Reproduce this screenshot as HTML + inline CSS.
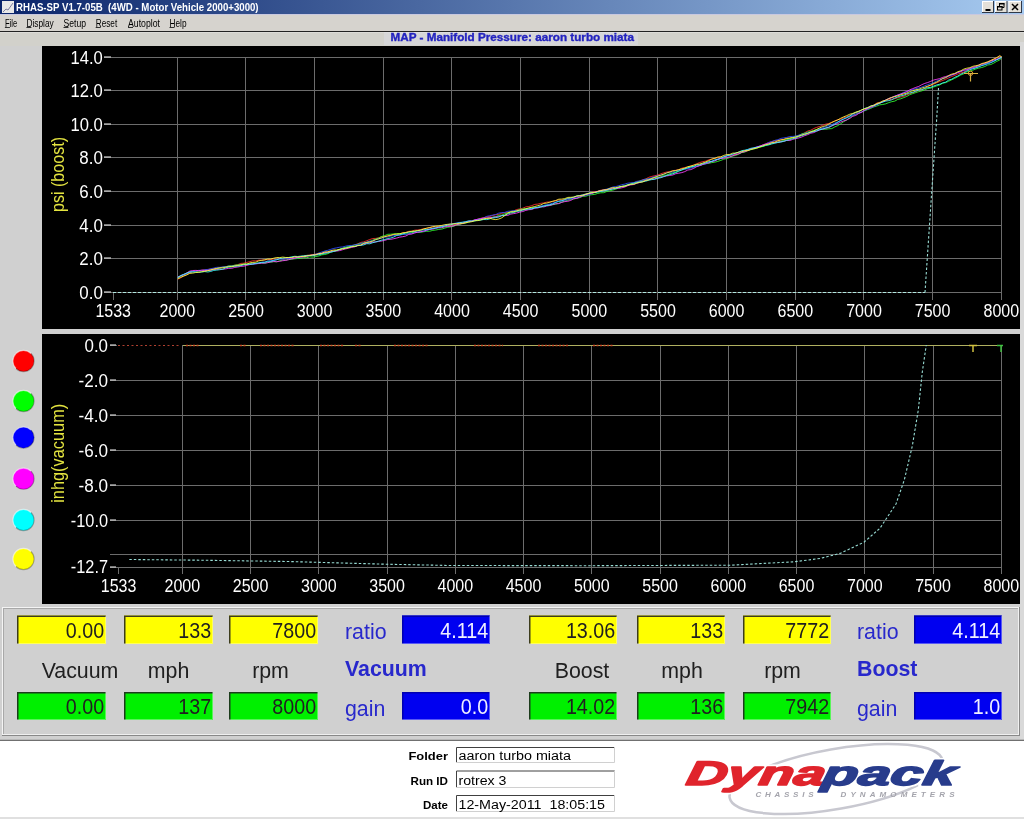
<!DOCTYPE html>
<html><head><meta charset="utf-8"><style>html,body{margin:0;padding:0;background:#d4d0c8;overflow:hidden}svg text{font-family:'Liberation Sans', sans-serif}</style></head>
<body>
<svg width="1024" height="819" viewBox="0 0 1024 819" style="display:block;font-family:'Liberation Sans', sans-serif;will-change:transform">
<defs><clipPath id="c1"><rect x="42" y="46" width="978" height="283"/></clipPath><linearGradient id="tb" x1="0" x2="1" y1="0" y2="0"><stop offset="0" stop-color="#0a246a"/><stop offset="1" stop-color="#a6caf0"/></linearGradient></defs>
<rect x="0" y="0" width="1024" height="819" fill="#d0d0d0"/>
<rect x="0" y="14" width="1024" height="18" fill="#d6d3ce"/>
<rect x="0" y="32" width="1024" height="14" fill="#d2d1cb"/>
<rect x="384" y="32" width="254" height="13" fill="#d6d6d8"/>
<rect x="1020" y="42" width="4" height="698" fill="#d9d9d9"/>
<rect x="0" y="0" width="1024" height="14" fill="url(#tb)"/>
<rect x="0" y="14" width="1024" height="1" fill="#c8c8e0"/>
<rect x="2" y="1" width="12" height="12" fill="#e8e8e8"/>
<polyline points="3,12 6,9 8,10 13,3" fill="none" stroke="#8080a0" stroke-width="1"/>
<text x="16" y="11" font-size="10" fill="#ffffff" text-anchor="start" font-weight="bold" textLength="242.6" lengthAdjust="spacingAndGlyphs" >RHAS-SP V1.7-05B&#160;&#160;(4WD - Motor Vehicle 2000+3000)</text>
<rect x="982" y="1" width="12" height="12" fill="#e4e0d8"/>
<rect x="982" y="1" width="12" height="1" fill="#ffffff"/><rect x="982" y="1" width="1" height="12" fill="#ffffff"/>
<rect x="982" y="12" width="12" height="1" fill="#303848"/><rect x="993" y="1" width="1" height="12" fill="#303848"/>
<rect x="995" y="1" width="12.5" height="12" fill="#e4e0d8"/>
<rect x="995" y="1" width="12.5" height="1" fill="#ffffff"/><rect x="995" y="1" width="1" height="12" fill="#ffffff"/>
<rect x="995" y="12" width="12.5" height="1" fill="#303848"/><rect x="1006.5" y="1" width="1" height="12" fill="#303848"/>
<rect x="1008.5" y="1" width="13.5" height="12" fill="#e4e0d8"/>
<rect x="1008.5" y="1" width="13.5" height="1" fill="#ffffff"/><rect x="1008.5" y="1" width="1" height="12" fill="#ffffff"/>
<rect x="1008.5" y="12" width="13.5" height="1" fill="#303848"/><rect x="1021.0" y="1" width="1" height="12" fill="#303848"/>
<rect x="985.5" y="9" width="5" height="2" fill="#000"/>
<path d="M999.5 6.5 V3.5 H1004 V7.5 H1002" fill="none" stroke="#000" stroke-width="1"/><rect x="999" y="3" width="5.5" height="1.5" fill="#000"/>
<rect x="997.5" y="6.5" width="4.5" height="3.5" fill="none" stroke="#000" stroke-width="1"/><rect x="997" y="6" width="5.5" height="1.5" fill="#000"/>
<path d="M1012 4 L1018 10 M1018 4 L1012 10" stroke="#000" stroke-width="1.5"/>
<text x="4.9" y="26.5" font-size="10.5" fill="#000" text-anchor="start" font-weight="normal" textLength="12.3" lengthAdjust="spacingAndGlyphs" >File</text>
<rect x="4.9" y="27" width="5.0" height="1" fill="#303030"/>
<text x="26.4" y="26.5" font-size="10.5" fill="#000" text-anchor="start" font-weight="normal" textLength="27.3" lengthAdjust="spacingAndGlyphs" >Display</text>
<rect x="26.4" y="27" width="5.0" height="1" fill="#303030"/>
<text x="63.5" y="26.5" font-size="10.5" fill="#000" text-anchor="start" font-weight="normal" textLength="22.5" lengthAdjust="spacingAndGlyphs" >Setup</text>
<rect x="63.5" y="27" width="5.0" height="1" fill="#303030"/>
<text x="95.7" y="26.5" font-size="10.5" fill="#000" text-anchor="start" font-weight="normal" textLength="21.5" lengthAdjust="spacingAndGlyphs" >Reset</text>
<rect x="95.7" y="27" width="5.0" height="1" fill="#303030"/>
<text x="128" y="26.5" font-size="10.5" fill="#000" text-anchor="start" font-weight="normal" textLength="32" lengthAdjust="spacingAndGlyphs" >Autoplot</text>
<rect x="128" y="27" width="5.0" height="1" fill="#303030"/>
<text x="169.5" y="26.5" font-size="10.5" fill="#000" text-anchor="start" font-weight="normal" textLength="17" lengthAdjust="spacingAndGlyphs" >Help</text>
<rect x="169.5" y="27" width="5.0" height="1" fill="#303030"/>
<rect x="0" y="31" width="1024" height="1" fill="#222222"/>
<rect x="0" y="32" width="1024" height="1" fill="#ffffff" opacity="0.25"/>
<text x="390.5" y="40.8" font-size="10.8" fill="#2424c0" text-anchor="start" font-weight="bold" textLength="243.5" lengthAdjust="spacingAndGlyphs" stroke="#2424c0" stroke-width="0.35">MAP - Manifold Pressure: aaron turbo miata</text>
<rect x="42" y="46" width="978" height="283" fill="#000"/>
<line x1="104" y1="292.5" x2="1001" y2="292.5" stroke="#6c6c6c" stroke-width="1"/>
<line x1="104" y1="258.5" x2="1001" y2="258.5" stroke="#6c6c6c" stroke-width="1"/>
<line x1="104" y1="225.5" x2="1001" y2="225.5" stroke="#6c6c6c" stroke-width="1"/>
<line x1="104" y1="191.5" x2="1001" y2="191.5" stroke="#6c6c6c" stroke-width="1"/>
<line x1="104" y1="157.5" x2="1001" y2="157.5" stroke="#6c6c6c" stroke-width="1"/>
<line x1="104" y1="124.5" x2="1001" y2="124.5" stroke="#6c6c6c" stroke-width="1"/>
<line x1="104" y1="90.5" x2="1001" y2="90.5" stroke="#6c6c6c" stroke-width="1"/>
<line x1="104" y1="57.5" x2="1001" y2="57.5" stroke="#6c6c6c" stroke-width="1"/>
<line x1="113.5" y1="292.0" x2="113.5" y2="300" stroke="#6c6c6c" stroke-width="1"/>
<line x1="177.5" y1="57.0" x2="177.5" y2="300" stroke="#6c6c6c" stroke-width="1"/>
<line x1="245.5" y1="57.0" x2="245.5" y2="300" stroke="#6c6c6c" stroke-width="1"/>
<line x1="314.5" y1="57.0" x2="314.5" y2="300" stroke="#6c6c6c" stroke-width="1"/>
<line x1="383.5" y1="57.0" x2="383.5" y2="300" stroke="#6c6c6c" stroke-width="1"/>
<line x1="451.5" y1="57.0" x2="451.5" y2="300" stroke="#6c6c6c" stroke-width="1"/>
<line x1="520.5" y1="57.0" x2="520.5" y2="300" stroke="#6c6c6c" stroke-width="1"/>
<line x1="589.5" y1="57.0" x2="589.5" y2="300" stroke="#6c6c6c" stroke-width="1"/>
<line x1="657.5" y1="57.0" x2="657.5" y2="300" stroke="#6c6c6c" stroke-width="1"/>
<line x1="726.5" y1="57.0" x2="726.5" y2="300" stroke="#6c6c6c" stroke-width="1"/>
<line x1="795.5" y1="57.0" x2="795.5" y2="300" stroke="#6c6c6c" stroke-width="1"/>
<line x1="863.5" y1="57.0" x2="863.5" y2="300" stroke="#6c6c6c" stroke-width="1"/>
<line x1="932.5" y1="57.0" x2="932.5" y2="300" stroke="#6c6c6c" stroke-width="1"/>
<line x1="1001.5" y1="57.0" x2="1001.5" y2="300" stroke="#6c6c6c" stroke-width="1"/>
<text x="102.8" y="299.0" font-size="18" fill="#fff" text-anchor="end" font-weight="normal" textLength="23.5" lengthAdjust="spacingAndGlyphs" >0.0</text>
<line x1="104" y1="292.0" x2="111" y2="292.0" stroke="#d0d0d0" stroke-width="1.2"/>
<text x="102.8" y="265.0" font-size="18" fill="#fff" text-anchor="end" font-weight="normal" textLength="23.5" lengthAdjust="spacingAndGlyphs" >2.0</text>
<line x1="104" y1="258.0" x2="111" y2="258.0" stroke="#d0d0d0" stroke-width="1.2"/>
<text x="102.8" y="232.0" font-size="18" fill="#fff" text-anchor="end" font-weight="normal" textLength="23.5" lengthAdjust="spacingAndGlyphs" >4.0</text>
<line x1="104" y1="225.0" x2="111" y2="225.0" stroke="#d0d0d0" stroke-width="1.2"/>
<text x="102.8" y="198.0" font-size="18" fill="#fff" text-anchor="end" font-weight="normal" textLength="23.5" lengthAdjust="spacingAndGlyphs" >6.0</text>
<line x1="104" y1="191.0" x2="111" y2="191.0" stroke="#d0d0d0" stroke-width="1.2"/>
<text x="102.8" y="164.0" font-size="18" fill="#fff" text-anchor="end" font-weight="normal" textLength="23.5" lengthAdjust="spacingAndGlyphs" >8.0</text>
<line x1="104" y1="157.0" x2="111" y2="157.0" stroke="#d0d0d0" stroke-width="1.2"/>
<text x="102.8" y="131.0" font-size="18" fill="#fff" text-anchor="end" font-weight="normal" textLength="32.3" lengthAdjust="spacingAndGlyphs" >10.0</text>
<line x1="104" y1="124.0" x2="111" y2="124.0" stroke="#d0d0d0" stroke-width="1.2"/>
<text x="102.8" y="97.0" font-size="18" fill="#fff" text-anchor="end" font-weight="normal" textLength="32.3" lengthAdjust="spacingAndGlyphs" >12.0</text>
<line x1="104" y1="90.0" x2="111" y2="90.0" stroke="#d0d0d0" stroke-width="1.2"/>
<text x="102.8" y="64.0" font-size="18" fill="#fff" text-anchor="end" font-weight="normal" textLength="32.3" lengthAdjust="spacingAndGlyphs" >14.0</text>
<line x1="104" y1="57.0" x2="111" y2="57.0" stroke="#d0d0d0" stroke-width="1.2"/>
<text x="113.2" y="317" font-size="18" fill="#fff" text-anchor="middle" font-weight="normal" textLength="35.6" lengthAdjust="spacingAndGlyphs" >1533</text>
<text x="177.3" y="317" font-size="18" fill="#fff" text-anchor="middle" font-weight="normal" textLength="35.6" lengthAdjust="spacingAndGlyphs" >2000</text>
<text x="246.0" y="317" font-size="18" fill="#fff" text-anchor="middle" font-weight="normal" textLength="35.6" lengthAdjust="spacingAndGlyphs" >2500</text>
<text x="314.6" y="317" font-size="18" fill="#fff" text-anchor="middle" font-weight="normal" textLength="35.6" lengthAdjust="spacingAndGlyphs" >3000</text>
<text x="383.3" y="317" font-size="18" fill="#fff" text-anchor="middle" font-weight="normal" textLength="35.6" lengthAdjust="spacingAndGlyphs" >3500</text>
<text x="452.0" y="317" font-size="18" fill="#fff" text-anchor="middle" font-weight="normal" textLength="35.6" lengthAdjust="spacingAndGlyphs" >4000</text>
<text x="520.6" y="317" font-size="18" fill="#fff" text-anchor="middle" font-weight="normal" textLength="35.6" lengthAdjust="spacingAndGlyphs" >4500</text>
<text x="589.3" y="317" font-size="18" fill="#fff" text-anchor="middle" font-weight="normal" textLength="35.6" lengthAdjust="spacingAndGlyphs" >5000</text>
<text x="658.0" y="317" font-size="18" fill="#fff" text-anchor="middle" font-weight="normal" textLength="35.6" lengthAdjust="spacingAndGlyphs" >5500</text>
<text x="726.6" y="317" font-size="18" fill="#fff" text-anchor="middle" font-weight="normal" textLength="35.6" lengthAdjust="spacingAndGlyphs" >6000</text>
<text x="795.3" y="317" font-size="18" fill="#fff" text-anchor="middle" font-weight="normal" textLength="35.6" lengthAdjust="spacingAndGlyphs" >6500</text>
<text x="864.0" y="317" font-size="18" fill="#fff" text-anchor="middle" font-weight="normal" textLength="35.6" lengthAdjust="spacingAndGlyphs" >7000</text>
<text x="932.6" y="317" font-size="18" fill="#fff" text-anchor="middle" font-weight="normal" textLength="35.6" lengthAdjust="spacingAndGlyphs" >7500</text>
<text x="1001.3" y="317" font-size="18" fill="#fff" text-anchor="middle" font-weight="normal" textLength="35.6" lengthAdjust="spacingAndGlyphs" >8000</text>
<text x="0" y="0" font-size="19" fill="#e4e440" text-anchor="middle" transform="translate(64.1,174.5) rotate(-90)" textLength="75" lengthAdjust="spacingAndGlyphs">psi (boost)</text>
<rect x="42" y="334" width="978" height="270" fill="#000"/>
<line x1="110" y1="345.5" x2="117" y2="345.5" stroke="#6c6c6c" stroke-width="1"/>
<line x1="110" y1="380.5" x2="1001" y2="380.5" stroke="#6c6c6c" stroke-width="1"/>
<line x1="110" y1="415.5" x2="1001" y2="415.5" stroke="#6c6c6c" stroke-width="1"/>
<line x1="110" y1="450.5" x2="1001" y2="450.5" stroke="#6c6c6c" stroke-width="1"/>
<line x1="110" y1="485.5" x2="1001" y2="485.5" stroke="#6c6c6c" stroke-width="1"/>
<line x1="110" y1="520.5" x2="1001" y2="520.5" stroke="#6c6c6c" stroke-width="1"/>
<line x1="110" y1="554.5" x2="1001" y2="554.5" stroke="#6c6c6c" stroke-width="1"/>
<line x1="110" y1="567.5" x2="1001" y2="567.5" stroke="#6c6c6c" stroke-width="1"/>
<line x1="118.5" y1="567.0" x2="118.5" y2="574" stroke="#6c6c6c" stroke-width="1"/>
<line x1="182.5" y1="345.0" x2="182.5" y2="574" stroke="#6c6c6c" stroke-width="1"/>
<line x1="250.5" y1="345.0" x2="250.5" y2="574" stroke="#6c6c6c" stroke-width="1"/>
<line x1="318.5" y1="345.0" x2="318.5" y2="574" stroke="#6c6c6c" stroke-width="1"/>
<line x1="387.5" y1="345.0" x2="387.5" y2="574" stroke="#6c6c6c" stroke-width="1"/>
<line x1="455.5" y1="345.0" x2="455.5" y2="574" stroke="#6c6c6c" stroke-width="1"/>
<line x1="523.5" y1="345.0" x2="523.5" y2="574" stroke="#6c6c6c" stroke-width="1"/>
<line x1="591.5" y1="345.0" x2="591.5" y2="574" stroke="#6c6c6c" stroke-width="1"/>
<line x1="660.5" y1="345.0" x2="660.5" y2="574" stroke="#6c6c6c" stroke-width="1"/>
<line x1="728.5" y1="345.0" x2="728.5" y2="574" stroke="#6c6c6c" stroke-width="1"/>
<line x1="796.5" y1="345.0" x2="796.5" y2="574" stroke="#6c6c6c" stroke-width="1"/>
<line x1="864.5" y1="345.0" x2="864.5" y2="574" stroke="#6c6c6c" stroke-width="1"/>
<line x1="933.5" y1="345.0" x2="933.5" y2="574" stroke="#6c6c6c" stroke-width="1"/>
<line x1="1001.5" y1="345.0" x2="1001.5" y2="574" stroke="#6c6c6c" stroke-width="1"/>
<text x="108" y="352.0" font-size="18" fill="#fff" text-anchor="end" font-weight="normal" textLength="23.5" lengthAdjust="spacingAndGlyphs" >0.0</text>
<line x1="110" y1="345.0" x2="116" y2="345.0" stroke="#d0d0d0" stroke-width="1.2"/>
<text x="108" y="387.0" font-size="18" fill="#fff" text-anchor="end" font-weight="normal" textLength="29.5" lengthAdjust="spacingAndGlyphs" >-2.0</text>
<line x1="110" y1="380.0" x2="116" y2="380.0" stroke="#d0d0d0" stroke-width="1.2"/>
<text x="108" y="422.0" font-size="18" fill="#fff" text-anchor="end" font-weight="normal" textLength="29.5" lengthAdjust="spacingAndGlyphs" >-4.0</text>
<line x1="110" y1="415.0" x2="116" y2="415.0" stroke="#d0d0d0" stroke-width="1.2"/>
<text x="108" y="457.0" font-size="18" fill="#fff" text-anchor="end" font-weight="normal" textLength="29.5" lengthAdjust="spacingAndGlyphs" >-6.0</text>
<line x1="110" y1="450.0" x2="116" y2="450.0" stroke="#d0d0d0" stroke-width="1.2"/>
<text x="108" y="492.0" font-size="18" fill="#fff" text-anchor="end" font-weight="normal" textLength="29.5" lengthAdjust="spacingAndGlyphs" >-8.0</text>
<line x1="110" y1="485.0" x2="116" y2="485.0" stroke="#d0d0d0" stroke-width="1.2"/>
<text x="108" y="527.0" font-size="18" fill="#fff" text-anchor="end" font-weight="normal" textLength="37.2" lengthAdjust="spacingAndGlyphs" >-10.0</text>
<line x1="110" y1="520.0" x2="116" y2="520.0" stroke="#d0d0d0" stroke-width="1.2"/>
<text x="108" y="573.0" font-size="18" fill="#fff" text-anchor="end" font-weight="normal" textLength="37.2" lengthAdjust="spacingAndGlyphs" >-12.7</text>
<line x1="110" y1="567.0" x2="116" y2="567.0" stroke="#d0d0d0" stroke-width="1.2"/>
<text x="118.6" y="591.5" font-size="18" fill="#fff" text-anchor="middle" font-weight="normal" textLength="35.6" lengthAdjust="spacingAndGlyphs" >1533</text>
<text x="182.3" y="591.5" font-size="18" fill="#fff" text-anchor="middle" font-weight="normal" textLength="35.6" lengthAdjust="spacingAndGlyphs" >2000</text>
<text x="250.6" y="591.5" font-size="18" fill="#fff" text-anchor="middle" font-weight="normal" textLength="35.6" lengthAdjust="spacingAndGlyphs" >2500</text>
<text x="318.8" y="591.5" font-size="18" fill="#fff" text-anchor="middle" font-weight="normal" textLength="35.6" lengthAdjust="spacingAndGlyphs" >3000</text>
<text x="387.1" y="591.5" font-size="18" fill="#fff" text-anchor="middle" font-weight="normal" textLength="35.6" lengthAdjust="spacingAndGlyphs" >3500</text>
<text x="455.3" y="591.5" font-size="18" fill="#fff" text-anchor="middle" font-weight="normal" textLength="35.6" lengthAdjust="spacingAndGlyphs" >4000</text>
<text x="523.5" y="591.5" font-size="18" fill="#fff" text-anchor="middle" font-weight="normal" textLength="35.6" lengthAdjust="spacingAndGlyphs" >4500</text>
<text x="591.8" y="591.5" font-size="18" fill="#fff" text-anchor="middle" font-weight="normal" textLength="35.6" lengthAdjust="spacingAndGlyphs" >5000</text>
<text x="660.1" y="591.5" font-size="18" fill="#fff" text-anchor="middle" font-weight="normal" textLength="35.6" lengthAdjust="spacingAndGlyphs" >5500</text>
<text x="728.3" y="591.5" font-size="18" fill="#fff" text-anchor="middle" font-weight="normal" textLength="35.6" lengthAdjust="spacingAndGlyphs" >6000</text>
<text x="796.5" y="591.5" font-size="18" fill="#fff" text-anchor="middle" font-weight="normal" textLength="35.6" lengthAdjust="spacingAndGlyphs" >6500</text>
<text x="864.8" y="591.5" font-size="18" fill="#fff" text-anchor="middle" font-weight="normal" textLength="35.6" lengthAdjust="spacingAndGlyphs" >7000</text>
<text x="933.0" y="591.5" font-size="18" fill="#fff" text-anchor="middle" font-weight="normal" textLength="35.6" lengthAdjust="spacingAndGlyphs" >7500</text>
<text x="1001.3" y="591.5" font-size="18" fill="#fff" text-anchor="middle" font-weight="normal" textLength="35.6" lengthAdjust="spacingAndGlyphs" >8000</text>
<text x="0" y="0" font-size="19" fill="#e4e440" text-anchor="middle" transform="translate(64.1,453.3) rotate(-90)" textLength="99" lengthAdjust="spacingAndGlyphs">inhg(vacuum)</text>
<g clip-path="url(#c1)">
<polyline points="177.8,279.2 180.8,277.8 183.8,276.0 186.8,274.5 189.8,272.8 192.8,271.6 195.8,271.0 198.8,271.1 201.8,270.2 204.8,269.7 207.8,269.9 210.8,269.0 213.8,268.9 216.8,268.1 219.8,267.9 222.8,267.0 225.8,266.9 228.8,266.6 231.8,265.8 234.8,265.3 237.8,264.6 240.8,263.4 243.8,263.2 246.8,262.4 249.8,261.6 252.8,260.8 255.8,260.9 258.8,260.2 261.8,260.0 264.8,259.9 267.8,259.6 270.8,259.5 273.8,259.0 276.8,259.2 279.8,258.7 282.8,259.0 285.8,258.8 288.8,257.9 291.8,257.6 294.8,257.2 297.8,257.4 300.8,256.5 303.8,256.2 306.8,255.4 309.8,255.1 312.8,254.6 315.8,254.1 318.8,253.6 321.8,253.0 324.8,252.6 327.8,251.9 330.8,251.5 333.8,250.9 336.8,250.4 339.8,249.4 342.8,248.2 345.8,248.0 348.8,247.1 351.8,246.1 354.8,244.8 357.8,243.8 360.8,242.4 363.8,241.9 366.8,240.7 369.8,239.5 372.8,238.5 375.8,238.4 378.8,237.8 381.8,236.5 384.8,236.5 387.8,235.7 390.8,235.0 393.8,234.6 396.8,234.5 399.8,234.0 402.8,232.7 405.8,232.5 408.8,231.3 411.8,231.2 414.8,230.2 417.8,230.0 420.8,229.5 423.8,228.5 426.8,228.4 429.8,227.5 432.8,226.9 435.8,227.0 438.8,226.3 441.8,226.2 444.8,226.1 447.8,225.9 450.8,225.2 453.8,224.7 456.8,224.8 459.8,223.8 462.8,223.6 465.8,222.7 468.8,221.5 471.8,220.7 474.8,219.9 477.8,219.2 480.8,218.3 483.8,217.6 486.8,216.9 489.8,216.5 492.8,215.4 495.8,214.7 498.8,214.3 501.8,213.3 504.8,212.7 507.8,212.6 510.8,211.5 513.8,210.8 516.8,209.5 519.8,208.9 522.8,208.2 525.8,206.9 528.8,206.5 531.8,205.6 534.8,204.4 537.8,204.1 540.8,203.3 543.8,202.9 546.8,202.1 549.8,201.9 552.8,201.5 555.8,200.4 558.8,200.0 561.8,200.0 564.8,199.7 567.8,198.6 570.8,198.1 573.8,197.5 576.8,196.5 579.8,195.7 582.8,194.9 585.8,194.0 588.8,193.4 591.8,192.4 594.8,191.7 597.8,191.4 600.8,190.2 603.8,190.1 606.8,189.7 609.8,188.9 612.8,188.3 615.8,188.3 618.8,187.3 621.8,186.5 624.8,185.9 627.8,185.2 630.8,183.8 633.8,182.9 636.8,181.8 639.8,181.1 642.8,179.7 645.8,178.9 648.8,177.3 651.8,176.4 654.8,175.7 657.8,175.0 660.8,173.8 663.8,172.8 666.8,172.0 669.8,171.6 672.8,170.6 675.8,170.3 678.8,169.6 681.8,168.2 684.8,167.5 687.8,167.0 690.8,165.9 693.8,165.0 696.8,163.7 699.8,162.5 702.8,161.6 705.8,161.1 708.8,159.8 711.8,159.1 714.8,158.4 717.8,157.7 720.8,157.1 723.8,156.9 726.8,155.7 729.8,154.9 732.8,155.0 735.8,154.3 738.8,153.6 741.8,152.2 744.8,151.7 747.8,150.7 750.8,149.1 753.8,148.4 756.8,147.3 759.8,146.1 762.8,144.9 765.8,143.7 768.8,142.7 771.8,141.7 774.8,140.7 777.8,140.4 780.8,139.6 783.8,139.4 786.8,138.2 789.8,138.2 792.8,137.3 795.8,136.7 798.8,135.5 801.8,134.3 804.8,132.7 807.8,131.0 810.8,130.2 813.8,128.5 816.8,127.3 819.8,126.4 822.8,125.2 825.8,124.1 828.8,123.5 831.8,122.2 834.8,120.9 837.8,119.7 840.8,119.1 843.8,117.7 846.8,116.8 849.8,115.3 852.8,113.9 855.8,112.9 858.8,111.8 861.8,109.9 864.8,109.0 867.8,107.7 870.8,106.3 873.8,105.0 876.8,103.1 879.8,102.3 882.8,101.8 885.8,100.4 888.8,99.9 891.8,99.2 894.8,98.7 897.8,97.8 900.8,97.0 903.8,96.4 906.8,94.8 909.8,93.8 912.8,92.7 915.8,91.6 918.8,90.3 921.8,89.8 924.8,88.4 927.8,86.5 930.8,85.5 933.8,84.1 936.8,82.7 939.8,81.5 942.8,80.4 945.8,79.2 948.8,77.8 951.8,76.5 954.8,75.4 957.8,74.1 960.8,73.1 963.8,72.0 966.8,70.4 969.8,69.0 972.8,67.9 975.8,66.8 978.8,65.7 981.8,64.5 984.8,63.0 987.8,62.1 990.8,60.7 993.8,59.1 996.8,57.7 999.8,56.4 1001.7,57" fill="none" stroke="#ff3030" stroke-width="1" opacity="0.85"/>
<polyline points="177.8,277.9 180.8,276.1 183.8,274.8 186.8,273.1 189.8,271.6 192.8,271.4 195.8,271.3 198.8,270.7 201.8,270.8 204.8,270.6 207.8,270.6 210.8,270.1 213.8,269.1 216.8,269.0 219.8,268.3 222.8,267.2 225.8,266.7 228.8,265.9 231.8,265.8 234.8,265.2 237.8,264.9 240.8,264.5 243.8,264.1 246.8,264.0 249.8,263.7 252.8,263.2 255.8,263.5 258.8,263.0 261.8,262.9 264.8,263.2 267.8,262.4 270.8,262.1 273.8,261.7 276.8,261.8 279.8,260.7 282.8,260.1 285.8,260.2 288.8,259.2 291.8,259.3 294.8,258.8 297.8,258.5 300.8,258.3 303.8,257.7 306.8,257.7 309.8,256.8 312.8,257.2 315.8,256.5 318.8,256.0 321.8,254.8 324.8,254.5 327.8,253.7 330.8,252.1 333.8,251.3 336.8,250.5 339.8,249.7 342.8,248.2 345.8,247.2 348.8,246.3 351.8,245.8 354.8,245.1 357.8,244.1 360.8,243.5 363.8,242.9 366.8,242.3 369.8,241.8 372.8,240.1 375.8,239.0 378.8,238.0 381.8,236.4 384.8,235.6 387.8,234.3 390.8,234.2 393.8,233.9 396.8,233.7 399.8,233.6 402.8,233.8 405.8,234.0 408.8,233.6 411.8,232.6 414.8,232.2 417.8,232.4 420.8,232.3 423.8,231.7 426.8,231.3 429.8,231.2 432.8,230.4 435.8,230.0 438.8,229.4 441.8,229.1 444.8,228.1 447.8,227.3 450.8,226.9 453.8,226.3 456.8,224.9 459.8,224.4 462.8,223.3 465.8,223.0 468.8,222.1 471.8,221.2 474.8,220.6 477.8,219.9 480.8,219.7 483.8,219.1 486.8,218.4 489.8,217.9 492.8,217.1 495.8,216.7 498.8,215.3 501.8,215.1 504.8,213.8 507.8,212.9 510.8,211.9 513.8,211.4 516.8,210.5 519.8,209.6 522.8,208.9 525.8,208.6 528.8,208.3 531.8,207.5 534.8,207.4 537.8,207.3 540.8,206.5 543.8,205.9 546.8,205.5 549.8,205.4 552.8,204.7 555.8,204.2 558.8,203.3 561.8,202.0 564.8,201.1 567.8,200.3 570.8,199.3 573.8,198.9 576.8,198.3 579.8,197.6 582.8,196.4 585.8,196.2 588.8,195.2 591.8,194.7 594.8,194.4 597.8,193.4 600.8,192.8 603.8,192.7 606.8,191.5 609.8,190.8 612.8,190.1 615.8,189.2 618.8,187.7 621.8,186.9 624.8,185.9 627.8,184.8 630.8,183.6 633.8,182.9 636.8,182.3 639.8,181.1 642.8,180.4 645.8,179.4 648.8,178.9 651.8,178.5 654.8,177.5 657.8,177.4 660.8,176.6 663.8,175.2 666.8,175.0 669.8,173.6 672.8,172.9 675.8,172.0 678.8,170.6 681.8,170.0 684.8,169.0 687.8,168.3 690.8,167.1 693.8,166.7 696.8,166.2 699.8,165.4 702.8,164.6 705.8,163.7 708.8,163.4 711.8,162.6 714.8,162.2 717.8,161.4 720.8,160.4 723.8,159.2 726.8,158.6 729.8,157.5 732.8,156.0 735.8,155.4 738.8,154.1 741.8,152.6 744.8,152.1 747.8,150.5 750.8,149.7 753.8,149.1 756.8,148.1 759.8,147.2 762.8,146.5 765.8,145.5 768.8,144.5 771.8,143.5 774.8,142.5 777.8,142.2 780.8,141.4 783.8,140.3 786.8,139.5 789.8,138.3 792.8,137.3 795.8,136.4 798.8,135.6 801.8,133.8 804.8,133.2 807.8,132.0 810.8,131.5 813.8,130.3 816.8,129.5 819.8,128.8 822.8,129.1 825.8,129.3 828.8,128.8 831.8,128.6 834.8,126.9 837.8,125.6 840.8,123.7 843.8,121.6 846.8,119.9 849.8,117.5 852.8,115.5 855.8,114.1 858.8,112.9 861.8,111.9 864.8,110.7 867.8,109.5 870.8,108.3 873.8,106.9 876.8,106.0 879.8,104.8 882.8,104.5 885.8,103.8 888.8,102.6 891.8,101.7 894.8,101.1 897.8,99.4 900.8,98.8 903.8,97.6 906.8,96.4 909.8,94.7 912.8,93.6 915.8,92.6 918.8,91.6 921.8,90.9 924.8,89.7 927.8,88.5 930.8,88.1 933.8,86.9 936.8,85.9 939.8,84.9 942.8,83.2 945.8,82.6 948.8,81.2 951.8,79.7 954.8,78.3 957.8,76.7 960.8,75.0 963.8,73.8 966.8,72.0 969.8,71.2 972.8,70.2 975.8,69.0 978.8,68.1 981.8,67.5 984.8,66.5 987.8,65.0 990.8,64.5 993.8,63.1 996.8,61.3 999.8,60.0 1001.7,57" fill="none" stroke="#30ff30" stroke-width="1" opacity="0.85"/>
<polyline points="177.8,277.3 180.8,275.8 183.8,274.8 186.8,273.7 189.8,271.8 192.8,271.7 195.8,271.2 198.8,270.3 201.8,270.4 204.8,269.7 207.8,269.4 210.8,268.7 213.8,268.1 216.8,267.3 219.8,267.3 222.8,267.0 225.8,266.7 228.8,266.2 231.8,266.2 234.8,265.9 237.8,265.4 240.8,265.1 243.8,264.9 246.8,264.6 249.8,264.3 252.8,264.1 255.8,263.8 258.8,263.1 261.8,262.4 264.8,262.0 267.8,261.1 270.8,260.7 273.8,260.4 276.8,259.7 279.8,259.1 282.8,259.3 285.8,258.9 288.8,258.4 291.8,258.1 294.8,258.0 297.8,257.7 300.8,257.0 303.8,256.4 306.8,256.1 309.8,255.9 312.8,254.8 315.8,254.2 318.8,253.0 321.8,252.0 324.8,251.0 327.8,250.3 330.8,249.3 333.8,248.4 336.8,247.8 339.8,247.2 342.8,246.9 345.8,246.1 348.8,245.5 351.8,245.4 354.8,244.8 357.8,244.4 360.8,243.3 363.8,242.9 366.8,242.1 369.8,241.0 372.8,241.0 375.8,239.6 378.8,238.7 381.8,238.2 384.8,237.2 387.8,237.0 390.8,236.2 393.8,235.6 396.8,235.1 399.8,235.2 402.8,234.4 405.8,234.4 408.8,233.7 411.8,233.7 414.8,232.7 417.8,232.2 420.8,231.6 423.8,231.3 426.8,230.4 429.8,229.4 432.8,228.3 435.8,228.0 438.8,227.4 441.8,226.4 444.8,225.2 447.8,224.6 450.8,224.0 453.8,223.5 456.8,222.9 459.8,222.4 462.8,222.3 465.8,222.0 468.8,220.9 471.8,220.9 474.8,219.8 477.8,219.3 480.8,218.6 483.8,217.9 486.8,216.3 489.8,215.7 492.8,215.1 495.8,214.5 498.8,213.1 501.8,212.6 504.8,212.4 507.8,211.3 510.8,211.1 513.8,210.6 516.8,210.5 519.8,210.3 522.8,209.4 525.8,209.4 528.8,208.9 531.8,208.5 534.8,207.7 537.8,207.3 540.8,206.1 543.8,205.4 546.8,204.5 549.8,204.1 552.8,203.1 555.8,202.1 558.8,201.2 561.8,200.9 564.8,200.2 567.8,199.6 570.8,198.7 573.8,198.2 576.8,197.3 579.8,197.0 582.8,195.7 585.8,195.3 588.8,194.6 591.8,193.7 594.8,192.3 597.8,191.4 600.8,190.9 603.8,189.8 606.8,189.0 609.8,188.1 612.8,187.0 615.8,186.6 618.8,185.7 621.8,184.7 624.8,184.1 627.8,183.2 630.8,182.8 633.8,182.6 636.8,181.3 639.8,181.0 642.8,179.9 645.8,179.1 648.8,178.8 651.8,177.6 654.8,176.5 657.8,175.7 660.8,175.1 663.8,174.2 666.8,172.8 669.8,172.2 672.8,172.0 675.8,170.7 678.8,170.3 681.8,169.6 684.8,169.3 687.8,168.6 690.8,168.1 693.8,167.2 696.8,166.2 699.8,165.4 702.8,164.4 705.8,164.0 708.8,162.3 711.8,161.1 714.8,160.7 717.8,159.0 720.8,158.4 723.8,156.6 726.8,155.9 729.8,154.7 732.8,154.2 735.8,153.2 738.8,152.3 741.8,151.6 744.8,150.9 747.8,149.6 750.8,149.0 753.8,147.9 756.8,146.7 759.8,146.2 762.8,145.0 765.8,144.0 768.8,142.4 771.8,141.5 774.8,140.4 777.8,139.7 780.8,138.4 783.8,137.9 786.8,137.4 789.8,136.5 792.8,136.4 795.8,136.1 798.8,135.1 801.8,134.5 804.8,133.7 807.8,132.6 810.8,131.9 813.8,131.5 816.8,130.0 819.8,129.0 822.8,127.6 825.8,126.6 828.8,125.4 831.8,124.7 834.8,123.1 837.8,121.8 840.8,120.5 843.8,118.9 846.8,117.9 849.8,116.4 852.8,115.1 855.8,114.3 858.8,113.1 861.8,111.9 864.8,110.2 867.8,109.2 870.8,107.6 873.8,106.6 876.8,105.0 879.8,103.0 882.8,102.1 885.8,100.1 888.8,98.6 891.8,97.7 894.8,96.1 897.8,95.0 900.8,93.9 903.8,92.3 906.8,91.8 909.8,90.4 912.8,89.6 915.8,88.6 918.8,88.0 921.8,87.1 924.8,85.8 927.8,84.6 930.8,83.6 933.8,82.6 936.8,81.0 939.8,79.7 942.8,78.8 945.8,77.5 948.8,76.4 951.8,75.2 954.8,74.0 957.8,72.5 960.8,71.2 963.8,70.4 966.8,69.6 969.8,68.9 972.8,68.3 975.8,67.4 978.8,67.0 981.8,65.6 984.8,64.8 987.8,64.1 990.8,62.9 993.8,61.0 996.8,59.4 999.8,58.4 1001.7,57" fill="none" stroke="#3050ff" stroke-width="1" opacity="0.85"/>
<polyline points="177.8,277.2 180.8,275.7 183.8,274.5 186.8,272.9 189.8,271.1 192.8,270.5 195.8,270.4 198.8,270.6 201.8,270.2 204.8,270.6 207.8,270.3 210.8,270.3 213.8,269.4 216.8,269.4 219.8,269.1 222.8,269.3 225.8,268.9 228.8,268.3 231.8,268.3 234.8,267.4 237.8,267.0 240.8,266.4 243.8,266.2 246.8,265.3 249.8,264.6 252.8,263.9 255.8,263.8 258.8,263.5 261.8,263.2 264.8,263.1 267.8,262.7 270.8,261.9 273.8,261.5 276.8,261.7 279.8,261.3 282.8,260.7 285.8,260.4 288.8,259.7 291.8,258.8 294.8,258.1 297.8,257.3 300.8,257.2 303.8,256.8 306.8,256.2 309.8,255.3 312.8,255.1 315.8,254.8 318.8,254.1 321.8,253.4 324.8,252.7 327.8,252.3 330.8,251.6 333.8,251.1 336.8,251.0 339.8,250.6 342.8,249.7 345.8,248.9 348.8,248.1 351.8,247.4 354.8,246.8 357.8,245.7 360.8,245.3 363.8,243.9 366.8,243.3 369.8,242.8 372.8,242.1 375.8,241.9 378.8,241.4 381.8,241.0 384.8,240.3 387.8,239.4 390.8,239.3 393.8,238.7 396.8,238.0 399.8,237.1 402.8,236.7 405.8,236.0 408.8,234.4 411.8,234.0 414.8,232.9 417.8,232.2 420.8,231.7 423.8,231.1 426.8,230.1 429.8,229.2 432.8,229.2 435.8,228.1 438.8,227.8 441.8,227.7 444.8,226.9 447.8,226.4 450.8,226.4 453.8,225.8 456.8,224.6 459.8,223.9 462.8,223.1 465.8,222.2 468.8,221.5 471.8,221.3 474.8,219.9 477.8,219.3 480.8,218.7 483.8,218.1 486.8,218.0 489.8,217.7 492.8,217.4 495.8,216.8 498.8,216.6 501.8,215.5 504.8,215.3 507.8,215.4 510.8,214.1 513.8,213.6 516.8,213.0 519.8,212.1 522.8,211.5 525.8,210.4 528.8,209.7 531.8,209.5 534.8,208.1 537.8,208.0 540.8,206.8 543.8,206.9 546.8,206.0 549.8,205.5 552.8,204.5 555.8,203.7 558.8,203.6 561.8,202.4 564.8,201.6 567.8,201.3 570.8,200.4 573.8,198.7 576.8,198.4 579.8,197.0 582.8,195.8 585.8,194.6 588.8,193.8 591.8,193.4 594.8,192.1 597.8,191.3 600.8,190.6 603.8,190.1 606.8,189.8 609.8,189.7 612.8,188.6 615.8,188.2 618.8,188.4 621.8,187.8 624.8,187.0 627.8,185.7 630.8,184.9 633.8,184.5 636.8,183.2 639.8,182.5 642.8,181.3 645.8,180.3 648.8,179.7 651.8,179.3 654.8,178.7 657.8,177.9 660.8,177.2 663.8,176.6 666.8,175.9 669.8,175.4 672.8,175.0 675.8,173.7 678.8,173.2 681.8,172.6 684.8,171.6 687.8,170.0 690.8,169.6 693.8,168.3 696.8,166.6 699.8,165.6 702.8,164.4 705.8,163.2 708.8,162.9 711.8,161.5 714.8,160.9 717.8,159.5 720.8,158.5 723.8,158.4 726.8,157.5 729.8,156.8 732.8,155.7 735.8,154.6 738.8,153.8 741.8,152.3 744.8,151.5 747.8,150.4 750.8,149.0 753.8,148.3 756.8,147.0 759.8,146.1 762.8,145.1 765.8,144.2 768.8,143.5 771.8,142.9 774.8,142.6 777.8,142.1 780.8,141.7 783.8,141.3 786.8,140.4 789.8,140.5 792.8,139.4 795.8,138.6 798.8,137.9 801.8,137.0 804.8,135.6 807.8,134.6 810.8,133.2 813.8,132.6 816.8,131.1 819.8,130.0 822.8,129.0 825.8,128.3 828.8,127.5 831.8,126.0 834.8,124.7 837.8,123.6 840.8,122.0 843.8,120.9 846.8,119.9 849.8,118.4 852.8,116.3 855.8,115.4 858.8,113.4 861.8,112.2 864.8,110.1 867.8,108.4 870.8,107.2 873.8,105.9 876.8,104.2 879.8,103.2 882.8,101.5 885.8,99.9 888.8,98.6 891.8,97.5 894.8,96.2 897.8,95.0 900.8,94.0 903.8,93.0 906.8,91.5 909.8,89.8 912.8,88.6 915.8,87.4 918.8,86.4 921.8,84.7 924.8,83.4 927.8,82.5 930.8,81.3 933.8,80.0 936.8,79.3 939.8,78.6 942.8,77.3 945.8,76.5 948.8,75.6 951.8,74.7 954.8,73.9 957.8,72.5 960.8,71.6 963.8,70.1 966.8,69.6 969.8,68.2 972.8,67.3 975.8,66.6 978.8,65.1 981.8,64.0 984.8,63.5 987.8,62.4 990.8,61.1 993.8,60.0 996.8,59.2 999.8,58.0 1001.7,57" fill="none" stroke="#ff40ff" stroke-width="1" opacity="0.85"/>
<polyline points="177.8,277.4 180.8,275.5 183.8,274.3 186.8,273.2 189.8,272.2 192.8,272.0 195.8,272.2 198.8,272.2 201.8,272.0 204.8,271.6 207.8,272.0 210.8,271.4 213.8,270.4 216.8,270.1 219.8,269.7 222.8,269.2 225.8,267.8 228.8,267.1 231.8,266.9 234.8,266.2 237.8,266.1 240.8,265.6 243.8,264.7 246.8,264.4 249.8,264.2 252.8,264.2 255.8,263.3 258.8,263.0 261.8,262.3 264.8,262.3 267.8,261.2 270.8,261.3 273.8,260.3 276.8,259.7 279.8,258.6 282.8,258.1 285.8,257.7 288.8,257.5 291.8,256.8 294.8,256.3 297.8,256.5 300.8,256.1 303.8,255.8 306.8,255.4 309.8,255.4 312.8,255.8 315.8,254.9 318.8,254.7 321.8,254.1 324.8,253.3 327.8,252.9 330.8,252.2 333.8,251.4 336.8,250.5 339.8,249.3 342.8,248.4 345.8,248.0 348.8,247.2 351.8,246.5 354.8,246.5 357.8,245.4 360.8,245.3 363.8,244.9 366.8,243.7 369.8,243.8 372.8,242.7 375.8,241.9 378.8,241.0 381.8,240.1 384.8,239.5 387.8,238.5 390.8,238.0 393.8,237.0 396.8,235.4 399.8,234.8 402.8,233.9 405.8,232.9 408.8,232.2 411.8,231.7 414.8,231.5 417.8,230.8 420.8,230.1 423.8,229.8 426.8,229.5 429.8,229.1 432.8,228.4 435.8,228.1 438.8,227.1 441.8,226.8 444.8,226.1 447.8,225.0 450.8,224.8 453.8,223.8 456.8,223.3 459.8,222.7 462.8,222.2 465.8,221.6 468.8,220.9 471.8,221.1 474.8,220.9 477.8,220.3 480.8,220.0 483.8,219.5 486.8,219.6 489.8,218.9 492.8,217.9 495.8,217.6 498.8,217.0 501.8,215.7 504.8,215.3 507.8,214.0 510.8,212.9 513.8,212.5 516.8,211.4 519.8,211.0 522.8,210.2 525.8,209.3 528.8,209.0 531.8,208.8 534.8,207.9 537.8,207.4 540.8,207.1 543.8,206.1 546.8,205.4 549.8,204.7 552.8,203.9 555.8,202.4 558.8,201.3 561.8,200.7 564.8,199.5 567.8,198.3 570.8,197.9 573.8,197.0 576.8,195.9 579.8,195.5 582.8,194.8 585.8,194.1 588.8,193.2 591.8,192.5 594.8,192.6 597.8,192.2 600.8,191.4 603.8,190.9 606.8,190.4 609.8,189.5 612.8,189.1 615.8,188.3 618.8,187.4 621.8,186.3 624.8,185.8 627.8,184.8 630.8,184.4 633.8,183.3 636.8,182.8 639.8,182.0 642.8,181.6 645.8,181.2 648.8,180.2 651.8,179.6 654.8,179.3 657.8,178.3 660.8,177.7 663.8,176.5 666.8,175.4 669.8,174.6 672.8,173.8 675.8,172.6 678.8,171.2 681.8,169.9 684.8,168.6 687.8,167.7 690.8,166.8 693.8,166.4 696.8,164.9 699.8,164.7 702.8,163.5 705.8,162.7 708.8,161.7 711.8,161.4 714.8,159.9 717.8,159.3 720.8,158.2 723.8,156.9 726.8,155.9 729.8,155.4 732.8,154.1 735.8,153.0 738.8,152.2 741.8,150.6 744.8,150.2 747.8,149.4 750.8,148.3 753.8,147.8 756.8,147.6 759.8,146.5 762.8,146.3 765.8,145.2 768.8,144.9 771.8,143.9 774.8,143.3 777.8,142.5 780.8,142.1 783.8,141.3 786.8,140.3 789.8,139.6 792.8,138.6 795.8,138.0 798.8,136.5 801.8,135.6 804.8,134.6 807.8,133.5 810.8,132.3 813.8,131.5 816.8,130.9 819.8,129.6 822.8,129.1 825.8,127.9 828.8,127.1 831.8,125.7 834.8,124.1 837.8,122.2 840.8,120.3 843.8,119.0 846.8,117.5 849.8,116.0 852.8,113.8 855.8,112.3 858.8,111.5 861.8,109.9 864.8,108.4 867.8,107.5 870.8,106.0 873.8,105.2 876.8,104.3 879.8,103.1 882.8,102.0 885.8,101.1 888.8,100.6 891.8,99.8 894.8,98.1 897.8,96.9 900.8,95.9 903.8,95.3 906.8,93.9 909.8,92.9 912.8,92.3 915.8,91.1 918.8,90.0 921.8,89.6 924.8,88.3 927.8,87.7 930.8,87.3 933.8,86.0 936.8,84.9 939.8,84.2 942.8,82.9 945.8,82.1 948.8,80.0 951.8,79.2 954.8,77.3 957.8,76.1 960.8,74.2 963.8,72.8 966.8,71.1 969.8,69.8 972.8,68.8 975.8,68.0 978.8,66.6 981.8,65.5 984.8,64.6 987.8,63.3 990.8,62.4 993.8,61.3 996.8,59.8 999.8,58.3 1001.7,57" fill="none" stroke="#40ffff" stroke-width="1" opacity="0.85"/>
<polyline points="177.8,278.7 180.8,277.2 183.8,276.0 186.8,274.9 189.8,273.4 192.8,273.1 195.8,272.5 198.8,272.4 201.8,271.7 204.8,271.3 207.8,270.7 210.8,269.8 213.8,269.1 216.8,268.4 219.8,267.7 222.8,267.8 225.8,267.1 228.8,266.4 231.8,266.6 234.8,265.9 237.8,265.5 240.8,264.9 243.8,264.1 246.8,264.2 249.8,262.9 252.8,262.4 255.8,262.2 258.8,260.8 261.8,260.4 264.8,259.8 267.8,259.0 270.8,259.0 273.8,258.2 276.8,257.5 279.8,257.6 282.8,257.1 285.8,257.5 288.8,257.5 291.8,257.5 294.8,256.7 297.8,257.0 300.8,256.5 303.8,256.4 306.8,255.9 309.8,255.5 312.8,254.9 315.8,254.7 318.8,253.5 321.8,253.4 324.8,251.9 327.8,251.9 330.8,250.7 333.8,250.0 336.8,250.0 339.8,249.3 342.8,248.9 345.8,248.2 348.8,247.7 351.8,246.7 354.8,246.4 357.8,245.5 360.8,245.0 363.8,243.3 366.8,242.4 369.8,241.9 372.8,241.0 375.8,239.6 378.8,238.8 381.8,237.7 384.8,236.7 387.8,236.0 390.8,235.4 393.8,234.3 396.8,234.0 399.8,233.8 402.8,232.9 405.8,232.5 408.8,231.8 411.8,231.3 414.8,231.0 417.8,230.5 420.8,230.1 423.8,229.0 426.8,228.1 429.8,227.5 432.8,226.7 435.8,226.2 438.8,225.9 441.8,225.4 444.8,224.7 447.8,224.3 450.8,224.0 453.8,223.8 456.8,223.7 459.8,223.2 462.8,223.4 465.8,222.7 468.8,222.1 471.8,221.7 474.8,220.7 477.8,220.6 480.8,219.9 483.8,218.8 486.8,218.3 489.8,218.3 492.8,219.2 495.8,219.6 498.8,219.0 501.8,217.8 504.8,215.6 507.8,213.0 510.8,211.8 513.8,211.7 516.8,210.8 519.8,210.1 522.8,209.6 525.8,208.8 528.8,207.9 531.8,207.2 534.8,206.5 537.8,205.7 540.8,204.9 543.8,203.4 546.8,203.1 549.8,202.2 552.8,201.2 555.8,200.6 558.8,199.2 561.8,199.1 564.8,198.6 567.8,197.4 570.8,197.3 573.8,197.1 576.8,196.0 579.8,195.9 582.8,195.4 585.8,194.3 588.8,193.4 591.8,192.7 594.8,192.5 597.8,191.4 600.8,190.6 603.8,189.9 606.8,189.6 609.8,188.4 612.8,187.6 615.8,187.8 618.8,186.8 621.8,186.4 624.8,186.3 627.8,185.1 630.8,184.3 633.8,184.3 636.8,183.1 639.8,182.3 642.8,182.0 645.8,180.4 648.8,179.9 651.8,178.4 654.8,177.3 657.8,176.1 660.8,175.2 663.8,174.1 666.8,172.9 669.8,172.0 672.8,170.9 675.8,170.5 678.8,169.7 681.8,168.8 684.8,168.1 687.8,166.7 690.8,166.1 693.8,165.2 696.8,164.3 699.8,164.0 702.8,163.0 705.8,161.9 708.8,160.6 711.8,159.1 714.8,158.3 717.8,157.0 720.8,156.8 723.8,155.4 726.8,154.6 729.8,154.4 732.8,153.1 735.8,153.1 738.8,152.0 741.8,151.7 744.8,150.6 747.8,150.6 750.8,149.5 753.8,148.7 756.8,148.1 759.8,147.1 762.8,145.8 765.8,144.7 768.8,144.0 771.8,142.5 774.8,142.1 777.8,140.8 780.8,140.0 783.8,139.4 786.8,138.5 789.8,138.1 792.8,137.7 795.8,137.0 798.8,136.0 801.8,135.0 804.8,134.1 807.8,133.3 810.8,131.8 813.8,130.9 816.8,129.4 819.8,127.8 822.8,126.5 825.8,125.7 828.8,124.1 831.8,122.5 834.8,121.1 837.8,119.9 840.8,118.2 843.8,116.8 846.8,115.6 849.8,114.2 852.8,113.4 855.8,112.2 858.8,111.1 861.8,109.9 864.8,108.7 867.8,107.8 870.8,106.1 873.8,105.5 876.8,103.5 879.8,102.7 882.8,100.9 885.8,100.2 888.8,98.6 891.8,97.3 894.8,96.6 897.8,95.8 900.8,94.8 903.8,93.9 906.8,93.1 909.8,91.5 912.8,90.8 915.8,89.7 918.8,89.3 921.8,88.1 924.8,87.2 927.8,86.1 930.8,85.0 933.8,83.4 936.8,82.1 939.8,80.3 942.8,78.4 945.8,77.6 948.8,75.5 951.8,74.1 954.8,73.4 957.8,71.7 960.8,70.8 963.8,69.1 966.8,68.2 969.8,67.7 972.8,66.3 975.8,65.7 978.8,65.1 981.8,63.5 984.8,62.8 987.8,61.7 990.8,60.4 993.8,59.1 996.8,57.6 999.8,55.6 1001.7,57" fill="none" stroke="#ffff40" stroke-width="1" opacity="0.85"/>
</g>
<line x1="113" y1="292.5" x2="925" y2="292.5" stroke="#b0e8e0" stroke-width="1.2" stroke-dasharray="3,2"/>
<polyline points="925,292.5 931.7,192 936.7,118.7 938.5,88" fill="none" stroke="#98dcd4" stroke-width="1.1" stroke-dasharray="2.5,2"/>
<path d="M964 73.5 H978 M970.5 74 V81.5" stroke="#d8b040" stroke-width="1.2" fill="none"/><circle cx="970.5" cy="73.3" r="2.2" fill="none" stroke="#e0a030" stroke-width="1"/>
<line x1="118" y1="345.5" x2="181" y2="345.5" stroke="#b04030" stroke-width="1.1" stroke-dasharray="2,2.5"/>
<line x1="183" y1="345.5" x2="1001" y2="345.5" stroke="#b0b060" stroke-width="1.2"/>
<line x1="186" y1="345.5" x2="199" y2="345.5" stroke="#c84828" stroke-width="1.3" stroke-dasharray="2,1.5"/>
<line x1="240" y1="345.5" x2="246" y2="345.5" stroke="#c84828" stroke-width="1.3" stroke-dasharray="2,1.5"/>
<line x1="260" y1="345.5" x2="294" y2="345.5" stroke="#c84828" stroke-width="1.3" stroke-dasharray="2,1.5"/>
<line x1="320" y1="345.5" x2="344" y2="345.5" stroke="#c84828" stroke-width="1.3" stroke-dasharray="2,1.5"/>
<line x1="355" y1="345.5" x2="362" y2="345.5" stroke="#c84828" stroke-width="1.3" stroke-dasharray="2,1.5"/>
<line x1="394" y1="345.5" x2="429" y2="345.5" stroke="#c84828" stroke-width="1.3" stroke-dasharray="2,1.5"/>
<line x1="474" y1="345.5" x2="503" y2="345.5" stroke="#c84828" stroke-width="1.3" stroke-dasharray="2,1.5"/>
<line x1="538" y1="345.5" x2="568" y2="345.5" stroke="#c84828" stroke-width="1.3" stroke-dasharray="2,1.5"/>
<line x1="593" y1="345.5" x2="613" y2="345.5" stroke="#c84828" stroke-width="1.3" stroke-dasharray="2,1.5"/>
<polyline points="129.3,559.5 200,560.2 287.5,561.5 385,564.2 450,565.5 590,565.7 730,565.2 794,561.8 820,558.5 840,553.4 864,542.2 880,528.2 896,504 904.3,480 912.3,446 918.3,410 922.3,372 926.3,345" fill="none" stroke="#98dcd4" stroke-width="1.1" stroke-dasharray="2.5,2"/>
<path d="M969 345.5 H977 M973 345 V352" stroke="#d0c040" stroke-width="1.5"/>
<path d="M997 345.5 H1003 M1001 345 V352" stroke="#40c040" stroke-width="1.5"/>
<circle cx="23.5" cy="361" r="10.6" fill="#ff0000"/>
<path d="M31.00 353.50 A10.6 10.6 0 0 1 16.00 368.50" fill="none" stroke="#000" stroke-opacity="0.28" stroke-width="1.1"/>
<path d="M16.00 368.50 A10.6 10.6 0 0 1 31.00 353.50" fill="none" stroke="#fff" stroke-opacity="0.55" stroke-width="1.1"/>
<circle cx="23.5" cy="401" r="10.6" fill="#00ff00"/>
<path d="M31.00 393.50 A10.6 10.6 0 0 1 16.00 408.50" fill="none" stroke="#000" stroke-opacity="0.28" stroke-width="1.1"/>
<path d="M16.00 408.50 A10.6 10.6 0 0 1 31.00 393.50" fill="none" stroke="#fff" stroke-opacity="0.55" stroke-width="1.1"/>
<circle cx="23.5" cy="437.6" r="10.6" fill="#0000ff"/>
<path d="M31.00 430.10 A10.6 10.6 0 0 1 16.00 445.10" fill="none" stroke="#000" stroke-opacity="0.28" stroke-width="1.1"/>
<path d="M16.00 445.10 A10.6 10.6 0 0 1 31.00 430.10" fill="none" stroke="#fff" stroke-opacity="0.55" stroke-width="1.1"/>
<circle cx="23.5" cy="478.7" r="10.6" fill="#ff00ff"/>
<path d="M31.00 471.20 A10.6 10.6 0 0 1 16.00 486.20" fill="none" stroke="#000" stroke-opacity="0.28" stroke-width="1.1"/>
<path d="M16.00 486.20 A10.6 10.6 0 0 1 31.00 471.20" fill="none" stroke="#fff" stroke-opacity="0.55" stroke-width="1.1"/>
<circle cx="23.5" cy="520" r="10.6" fill="#00ffff"/>
<path d="M31.00 512.50 A10.6 10.6 0 0 1 16.00 527.50" fill="none" stroke="#000" stroke-opacity="0.28" stroke-width="1.1"/>
<path d="M16.00 527.50 A10.6 10.6 0 0 1 31.00 512.50" fill="none" stroke="#fff" stroke-opacity="0.55" stroke-width="1.1"/>
<circle cx="23.5" cy="559" r="10.6" fill="#ffff00"/>
<path d="M31.00 551.50 A10.6 10.6 0 0 1 16.00 566.50" fill="none" stroke="#000" stroke-opacity="0.28" stroke-width="1.1"/>
<path d="M16.00 566.50 A10.6 10.6 0 0 1 31.00 551.50" fill="none" stroke="#fff" stroke-opacity="0.55" stroke-width="1.1"/>
<rect x="2" y="607" width="1018" height="1" fill="#f4f4f4"/><rect x="2" y="607" width="1" height="129" fill="#f4f4f4"/>
<rect x="3" y="608" width="1016" height="1" fill="#a8a8a8"/><rect x="3" y="608" width="1" height="127" fill="#a8a8a8"/>
<rect x="3" y="734" width="1016" height="1" fill="#f0f0f0"/><rect x="1018" y="608" width="1" height="127" fill="#f0f0f0"/>
<rect x="2" y="735" width="1018" height="1" fill="#888888"/><rect x="1019" y="607" width="1" height="129" fill="#888888"/>
<rect x="17" y="615.5" width="89" height="28.5" fill="#ffff00"/>
<path d="M17.75 644 V616.25 H106" fill="none" stroke="#3c3c1c" stroke-width="1.5"/>
<path d="M17 643.5 H105.5 V615.5" fill="none" stroke="#ffffff" stroke-opacity="0.35" stroke-width="1"/>
<text x="104.2" y="637.6" font-size="21.5" fill="#202020" text-anchor="end" font-weight="normal" textLength="38.34" lengthAdjust="spacingAndGlyphs" >0.00</text>
<rect x="17" y="692" width="89" height="28" fill="#00f000"/>
<path d="M17.75 720 V692.75 H106" fill="none" stroke="#1c3c1c" stroke-width="1.5"/>
<path d="M17 719.5 H105.5 V692" fill="none" stroke="#ffffff" stroke-opacity="0.35" stroke-width="1"/>
<text x="104.2" y="713.6" font-size="21.5" fill="#202020" text-anchor="end" font-weight="normal" textLength="38.34" lengthAdjust="spacingAndGlyphs" >0.00</text>
<rect x="124" y="615.5" width="89" height="28.5" fill="#ffff00"/>
<path d="M124.75 644 V616.25 H213" fill="none" stroke="#3c3c1c" stroke-width="1.5"/>
<path d="M124 643.5 H212.5 V615.5" fill="none" stroke="#ffffff" stroke-opacity="0.35" stroke-width="1"/>
<text x="211.2" y="637.6" font-size="21.5" fill="#202020" text-anchor="end" font-weight="normal" textLength="32.87" lengthAdjust="spacingAndGlyphs" >133</text>
<rect x="124" y="692" width="89" height="28" fill="#00f000"/>
<path d="M124.75 720 V692.75 H213" fill="none" stroke="#1c3c1c" stroke-width="1.5"/>
<path d="M124 719.5 H212.5 V692" fill="none" stroke="#ffffff" stroke-opacity="0.35" stroke-width="1"/>
<text x="211.2" y="713.6" font-size="21.5" fill="#202020" text-anchor="end" font-weight="normal" textLength="32.87" lengthAdjust="spacingAndGlyphs" >137</text>
<rect x="229" y="615.5" width="89" height="28.5" fill="#ffff00"/>
<path d="M229.75 644 V616.25 H318" fill="none" stroke="#3c3c1c" stroke-width="1.5"/>
<path d="M229 643.5 H317.5 V615.5" fill="none" stroke="#ffffff" stroke-opacity="0.35" stroke-width="1"/>
<text x="316.2" y="637.6" font-size="21.5" fill="#202020" text-anchor="end" font-weight="normal" textLength="43.83" lengthAdjust="spacingAndGlyphs" >7800</text>
<rect x="229" y="692" width="89" height="28" fill="#00f000"/>
<path d="M229.75 720 V692.75 H318" fill="none" stroke="#1c3c1c" stroke-width="1.5"/>
<path d="M229 719.5 H317.5 V692" fill="none" stroke="#ffffff" stroke-opacity="0.35" stroke-width="1"/>
<text x="316.2" y="713.6" font-size="21.5" fill="#202020" text-anchor="end" font-weight="normal" textLength="43.83" lengthAdjust="spacingAndGlyphs" >8000</text>
<rect x="402" y="615.5" width="88" height="28.5" fill="#0000f0"/>
<path d="M402.75 644 V616.25 H490" fill="none" stroke="#0000b0" stroke-width="1.5"/>
<path d="M402 643.5 H489.5 V615.5" fill="none" stroke="#ffffff" stroke-opacity="0.35" stroke-width="1"/>
<text x="488.2" y="637.6" font-size="21.5" fill="#f0f0ff" text-anchor="end" font-weight="normal" textLength="47.84" lengthAdjust="spacingAndGlyphs" >4.114</text>
<rect x="402" y="692" width="88" height="28" fill="#0000f0"/>
<path d="M402.75 720 V692.75 H490" fill="none" stroke="#0000b0" stroke-width="1.5"/>
<path d="M402 719.5 H489.5 V692" fill="none" stroke="#ffffff" stroke-opacity="0.35" stroke-width="1"/>
<text x="488.2" y="713.6" font-size="21.5" fill="#f0f0ff" text-anchor="end" font-weight="normal" textLength="27.39" lengthAdjust="spacingAndGlyphs" >0.0</text>
<text x="80.0" y="678" font-size="21.33" fill="#202020" text-anchor="middle" font-weight="normal" >Vacuum</text>
<text x="168.5" y="678" font-size="21.33" fill="#202020" text-anchor="middle" font-weight="normal" >mph</text>
<text x="270.5" y="678" font-size="21.33" fill="#202020" text-anchor="middle" font-weight="normal" >rpm</text>
<text x="345" y="639" font-size="21.33" fill="#2828cc" text-anchor="start" font-weight="normal" >ratio</text>
<text x="345" y="676" font-size="21.33" fill="#2828cc" text-anchor="start" font-weight="bold" >Vacuum</text>
<text x="345" y="716" font-size="21.33" fill="#2828cc" text-anchor="start" font-weight="normal" >gain</text>
<rect x="529" y="615.5" width="88" height="28.5" fill="#ffff00"/>
<path d="M529.75 644 V616.25 H617" fill="none" stroke="#3c3c1c" stroke-width="1.5"/>
<path d="M529 643.5 H616.5 V615.5" fill="none" stroke="#ffffff" stroke-opacity="0.35" stroke-width="1"/>
<text x="615.2" y="637.6" font-size="21.5" fill="#202020" text-anchor="end" font-weight="normal" textLength="49.3" lengthAdjust="spacingAndGlyphs" >13.06</text>
<rect x="529" y="692" width="88" height="28" fill="#00f000"/>
<path d="M529.75 720 V692.75 H617" fill="none" stroke="#1c3c1c" stroke-width="1.5"/>
<path d="M529 719.5 H616.5 V692" fill="none" stroke="#ffffff" stroke-opacity="0.35" stroke-width="1"/>
<text x="615.2" y="713.6" font-size="21.5" fill="#202020" text-anchor="end" font-weight="normal" textLength="49.3" lengthAdjust="spacingAndGlyphs" >14.02</text>
<rect x="637" y="615.5" width="88" height="28.5" fill="#ffff00"/>
<path d="M637.75 644 V616.25 H725" fill="none" stroke="#3c3c1c" stroke-width="1.5"/>
<path d="M637 643.5 H724.5 V615.5" fill="none" stroke="#ffffff" stroke-opacity="0.35" stroke-width="1"/>
<text x="723.2" y="637.6" font-size="21.5" fill="#202020" text-anchor="end" font-weight="normal" textLength="32.87" lengthAdjust="spacingAndGlyphs" >133</text>
<rect x="637" y="692" width="88" height="28" fill="#00f000"/>
<path d="M637.75 720 V692.75 H725" fill="none" stroke="#1c3c1c" stroke-width="1.5"/>
<path d="M637 719.5 H724.5 V692" fill="none" stroke="#ffffff" stroke-opacity="0.35" stroke-width="1"/>
<text x="723.2" y="713.6" font-size="21.5" fill="#202020" text-anchor="end" font-weight="normal" textLength="32.87" lengthAdjust="spacingAndGlyphs" >136</text>
<rect x="743" y="615.5" width="88" height="28.5" fill="#ffff00"/>
<path d="M743.75 644 V616.25 H831" fill="none" stroke="#3c3c1c" stroke-width="1.5"/>
<path d="M743 643.5 H830.5 V615.5" fill="none" stroke="#ffffff" stroke-opacity="0.35" stroke-width="1"/>
<text x="829.2" y="637.6" font-size="21.5" fill="#202020" text-anchor="end" font-weight="normal" textLength="43.83" lengthAdjust="spacingAndGlyphs" >7772</text>
<rect x="743" y="692" width="88" height="28" fill="#00f000"/>
<path d="M743.75 720 V692.75 H831" fill="none" stroke="#1c3c1c" stroke-width="1.5"/>
<path d="M743 719.5 H830.5 V692" fill="none" stroke="#ffffff" stroke-opacity="0.35" stroke-width="1"/>
<text x="829.2" y="713.6" font-size="21.5" fill="#202020" text-anchor="end" font-weight="normal" textLength="43.83" lengthAdjust="spacingAndGlyphs" >7942</text>
<rect x="914" y="615.5" width="88" height="28.5" fill="#0000f0"/>
<path d="M914.75 644 V616.25 H1002" fill="none" stroke="#0000b0" stroke-width="1.5"/>
<path d="M914 643.5 H1001.5 V615.5" fill="none" stroke="#ffffff" stroke-opacity="0.35" stroke-width="1"/>
<text x="1000.2" y="637.6" font-size="21.5" fill="#f0f0ff" text-anchor="end" font-weight="normal" textLength="47.84" lengthAdjust="spacingAndGlyphs" >4.114</text>
<rect x="914" y="692" width="88" height="28" fill="#0000f0"/>
<path d="M914.75 720 V692.75 H1002" fill="none" stroke="#0000b0" stroke-width="1.5"/>
<path d="M914 719.5 H1001.5 V692" fill="none" stroke="#ffffff" stroke-opacity="0.35" stroke-width="1"/>
<text x="1000.2" y="713.6" font-size="21.5" fill="#f0f0ff" text-anchor="end" font-weight="normal" textLength="27.39" lengthAdjust="spacingAndGlyphs" >1.0</text>
<text x="582.0" y="678" font-size="21.33" fill="#202020" text-anchor="middle" font-weight="normal" >Boost</text>
<text x="682.0" y="678" font-size="21.33" fill="#202020" text-anchor="middle" font-weight="normal" >mph</text>
<text x="782.5" y="678" font-size="21.33" fill="#202020" text-anchor="middle" font-weight="normal" >rpm</text>
<text x="857" y="639" font-size="21.33" fill="#2828cc" text-anchor="start" font-weight="normal" >ratio</text>
<text x="857" y="676" font-size="21.33" fill="#2828cc" text-anchor="start" font-weight="bold" >Boost</text>
<text x="857" y="716" font-size="21.33" fill="#2828cc" text-anchor="start" font-weight="normal" >gain</text>
<rect x="0" y="740" width="1024" height="1" fill="#707070"/>
<rect x="0" y="739" width="1024" height="1" fill="#b8b8b8"/>
<rect x="0" y="741" width="1024" height="78" fill="#ffffff"/>
<rect x="0" y="817" width="1024" height="2" fill="#e0e0e0"/>
<text x="448" y="759.5" font-size="11" fill="#000" text-anchor="end" font-weight="bold" textLength="39.6" lengthAdjust="spacingAndGlyphs" >Folder</text>
<rect x="456" y="747" width="159" height="16" fill="#fff"/>
<path d="M456.5 763 V747.5 H615" fill="none" stroke="#404040" stroke-width="1"/>
<path d="M456 762.5 H614.5 V747" fill="none" stroke="#d0d0d0" stroke-width="1"/>
<text x="458.5" y="759.5" font-size="12" fill="#000" text-anchor="start" font-weight="normal" textLength="112.5" lengthAdjust="spacingAndGlyphs" >aaron turbo miata</text>
<text x="448" y="784.5" font-size="11" fill="#000" text-anchor="end" font-weight="bold" textLength="37.5" lengthAdjust="spacingAndGlyphs" >Run ID</text>
<rect x="456" y="770.5" width="159" height="17.5" fill="#fff"/>
<path d="M456.5 788 V771.0 H615" fill="none" stroke="#404040" stroke-width="1"/>
<path d="M456 787.5 H614.5 V770.5" fill="none" stroke="#d0d0d0" stroke-width="1"/>
<text x="458.5" y="784.5" font-size="12" fill="#000" text-anchor="start" font-weight="normal" textLength="48" lengthAdjust="spacingAndGlyphs" >rotrex 3</text>
<text x="448" y="808.5" font-size="11" fill="#000" text-anchor="end" font-weight="bold" textLength="25" lengthAdjust="spacingAndGlyphs" >Date</text>
<rect x="456" y="795" width="159" height="17" fill="#fff"/>
<path d="M456.5 812 V795.5 H615" fill="none" stroke="#404040" stroke-width="1"/>
<path d="M456 811.5 H614.5 V795" fill="none" stroke="#d0d0d0" stroke-width="1"/>
<text x="458.5" y="808.5" font-size="12" fill="#000" text-anchor="start" font-weight="normal" textLength="146.5" lengthAdjust="spacingAndGlyphs" >12-May-2011&#160;&#160;18:05:15</text>
<ellipse cx="836" cy="779" rx="108" ry="30" fill="none" stroke="#c8c8d0" stroke-width="2.5" transform="rotate(-10 836 779)"/>
<g transform="translate(685,784.7) skewX(-10)"><text x="0" y="0" font-size="34" font-weight="bold" font-style="italic" fill="#ffffff" stroke="#ffffff" stroke-width="5" stroke-linejoin="round" textLength="139" lengthAdjust="spacingAndGlyphs">Dyna</text></g>
<g transform="translate(821,784.7) skewX(-10)"><text x="0" y="0" font-size="34" font-weight="bold" font-style="italic" fill="#ffffff" stroke="#ffffff" stroke-width="5" stroke-linejoin="round" textLength="133" lengthAdjust="spacingAndGlyphs">pack</text></g>
<g transform="translate(685,784.7) skewX(-10)"><text x="0" y="0" font-size="34" font-weight="bold" font-style="italic" fill="#e0242c" stroke="#e0242c" stroke-width="1.6" stroke-linejoin="round" textLength="139" lengthAdjust="spacingAndGlyphs">Dyna</text></g>
<g transform="translate(821,784.7) skewX(-10)"><text x="0" y="0" font-size="34" font-weight="bold" font-style="italic" fill="#283c8c" stroke="#283c8c" stroke-width="1.6" stroke-linejoin="round" textLength="133" lengthAdjust="spacingAndGlyphs">pack</text></g>
<text x="755.5" y="797.3" font-size="8" fill="#a4a4ac" font-weight="bold" font-style="italic" textLength="58" lengthAdjust="spacing">CHASSIS</text>
<text x="840.5" y="797.3" font-size="8" fill="#a4a4ac" font-weight="bold" font-style="italic" textLength="114" lengthAdjust="spacing">DYNAMOMETERS</text>
</svg>
</body></html>
